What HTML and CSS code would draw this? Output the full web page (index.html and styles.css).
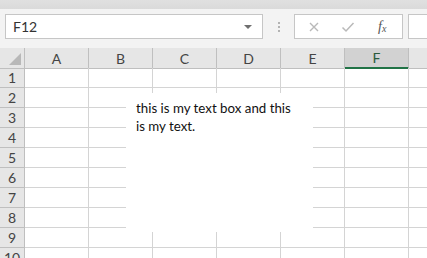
FILE: index.html
```html
<!DOCTYPE html>
<html lang="en">
<head>
  <meta charset="UTF-8">
  <title>Book1 - Excel</title>
  <link rel="stylesheet" href="styles.css">
</head>
<body>

  <div class="ribbon-edge"></div>

  <div class="formula-bar">
    <div class="name-box">
      <span>F12</span>
      <span class="drop-arrow"></span>
    </div>
    <div class="grip"><i></i><i></i><i></i></div>
    <div class="fx-box">
      <svg class="fx-icon" width="12" height="12" viewBox="0 0 12 12">
        <path d="M2 2 L10 10 M10 2 L2 10" stroke="#b9b9b9" stroke-width="1.4" fill="none"/>
      </svg>
      <svg class="fx-icon" width="14" height="12" viewBox="0 0 14 12">
        <path d="M1.5 6.5 L5 10 L12.5 2" stroke="#b9b9b9" stroke-width="1.5" fill="none"/>
      </svg>
      <span class="fx-label">f<sub>x</sub></span>
    </div>
    <div class="formula-input"></div>
  </div>

  <div class="sheet">
    <div class="grid">
      <div class="corner"><span></span></div>
      <div class="col-head">A</div>
      <div class="col-head">B</div>
      <div class="col-head">C</div>
      <div class="col-head">D</div>
      <div class="col-head">E</div>
      <div class="col-head selected">F</div>
      <div class="col-head"></div>
    </div>
    <div class="grid" id="rows"></div>

    <div class="text-box">this is my text box and this is my text.</div>
  </div>

  <script>
    // lignes 1 à 10, 7 colonnes chacune
    const rows = document.getElementById('rows');
    for (let r = 1; r <= 10; r++) {
      const head = document.createElement('div');
      head.className = 'row-head';
      head.textContent = r;
      rows.appendChild(head);
      for (let c = 0; c < 7; c++) {
        const cell = document.createElement('div');
        cell.className = 'cell';
        rows.appendChild(cell);
      }
    }
  </script>

</body>
</html>
```

FILE: styles.css
```css
:root {
  --grid-line: #d4d4d4;
  --head-bg: #e6e6e6;
  --head-line: #bfbfbf;
  --head-text: #444444;
  --excel-green: #217346;
  --chrome-bg: #f3f3f3;
  --font-ui: Lato, 'Open Sans', Arial, sans-serif;
}

body {
  margin: 0;
  width: 427px;
  height: 258px;
  overflow: hidden;
  font-family: var(--font-ui);
  background: var(--chrome-bg);
}

.ribbon-edge {
  height: 9px;
  background: linear-gradient(#e0e0e0, #dadada);
}

/* Barre de formule */
.formula-bar {
  display: flex;
  align-items: center;
  height: 25px;
  padding: 5px 0 9px 5px;
}

.name-box {
  width: 258px;
  height: 25px;
  box-sizing: border-box;
  border: 1px solid #c6c6c6;
  background: #fff;
  display: flex;
  align-items: center;
  justify-content: space-between;
  padding: 0 10px 0 7px;
  font-size: 14px;
  color: #333;
}

.drop-arrow {
  width: 0;
  height: 0;
  border-left: 4px solid transparent;
  border-right: 4px solid transparent;
  border-top: 4px solid #6f6f6f;
}

.grip {
  width: 31px;
  display: flex;
  flex-direction: column;
  align-items: center;
  gap: 2px;
}

.grip i {
  width: 2px;
  height: 2px;
  background: #b3b3b3;
}

.fx-box {
  width: 109px;
  height: 25px;
  box-sizing: border-box;
  border: 1px solid #c6c6c6;
  background: #fff;
  display: flex;
  align-items: center;
  padding-left: 13px;
  gap: 21px;
}

.fx-label {
  font-family: 'Liberation Serif', serif;
  font-style: italic;
  font-size: 14px;
  color: #555;
  margin-left: 2px;
}

.fx-label sub {
  font-size: 10px;
  vertical-align: -1px;
}

.formula-input {
  margin-left: 5px;
  flex: 1;
  height: 25px;
  box-sizing: border-box;
  border: 1px solid #c6c6c6;
  border-right: none;
  background: #fff;
}

/* Feuille */
.sheet {
  position: relative;
  background: #fff;
}

.grid {
  display: grid;
  grid-template-columns: 25px repeat(6, 64px) 40px;
  grid-auto-rows: 20px;
}

.corner,
.col-head {
  height: 21px;
  box-sizing: border-box;
  background: var(--head-bg);
  border-right: 1px solid var(--head-line);
  border-bottom: 1px solid var(--head-line);
}

.corner {
  position: relative;
}

.corner span {
  position: absolute;
  right: 3px;
  bottom: 3px;
  width: 0;
  height: 0;
  border-left: 12px solid transparent;
  border-bottom: 12px solid #b8b8b8;
}

.col-head {
  text-align: center;
  font-size: 14px;
  line-height: 21px;
  color: var(--head-text);
}

.col-head.selected {
  background: #d2d2d2;
  color: #2b5a3c;
  border-bottom: 2px solid var(--excel-green);
  line-height: 20px;
}

.row-head {
  box-sizing: border-box;
  background: var(--head-bg);
  border-right: 1px solid var(--head-line);
  border-bottom: 1px solid var(--head-line);
  text-align: center;
  font-size: 14px;
  line-height: 20px;
  color: var(--head-text);
}

.cell {
  box-sizing: border-box;
  border-right: 1px solid var(--grid-line);
  border-bottom: 1px solid var(--grid-line);
}

/* Zone de texte posée sur la grille */
.text-box {
  position: absolute;
  left: 126px;
  top: 45px;
  width: 187px;
  height: 139px;
  box-sizing: border-box;
  background: #fff;
  padding: 6px 15px 6px 10px;
  font-size: 13.3px;
  line-height: 18px;
  color: #111;
}
```
